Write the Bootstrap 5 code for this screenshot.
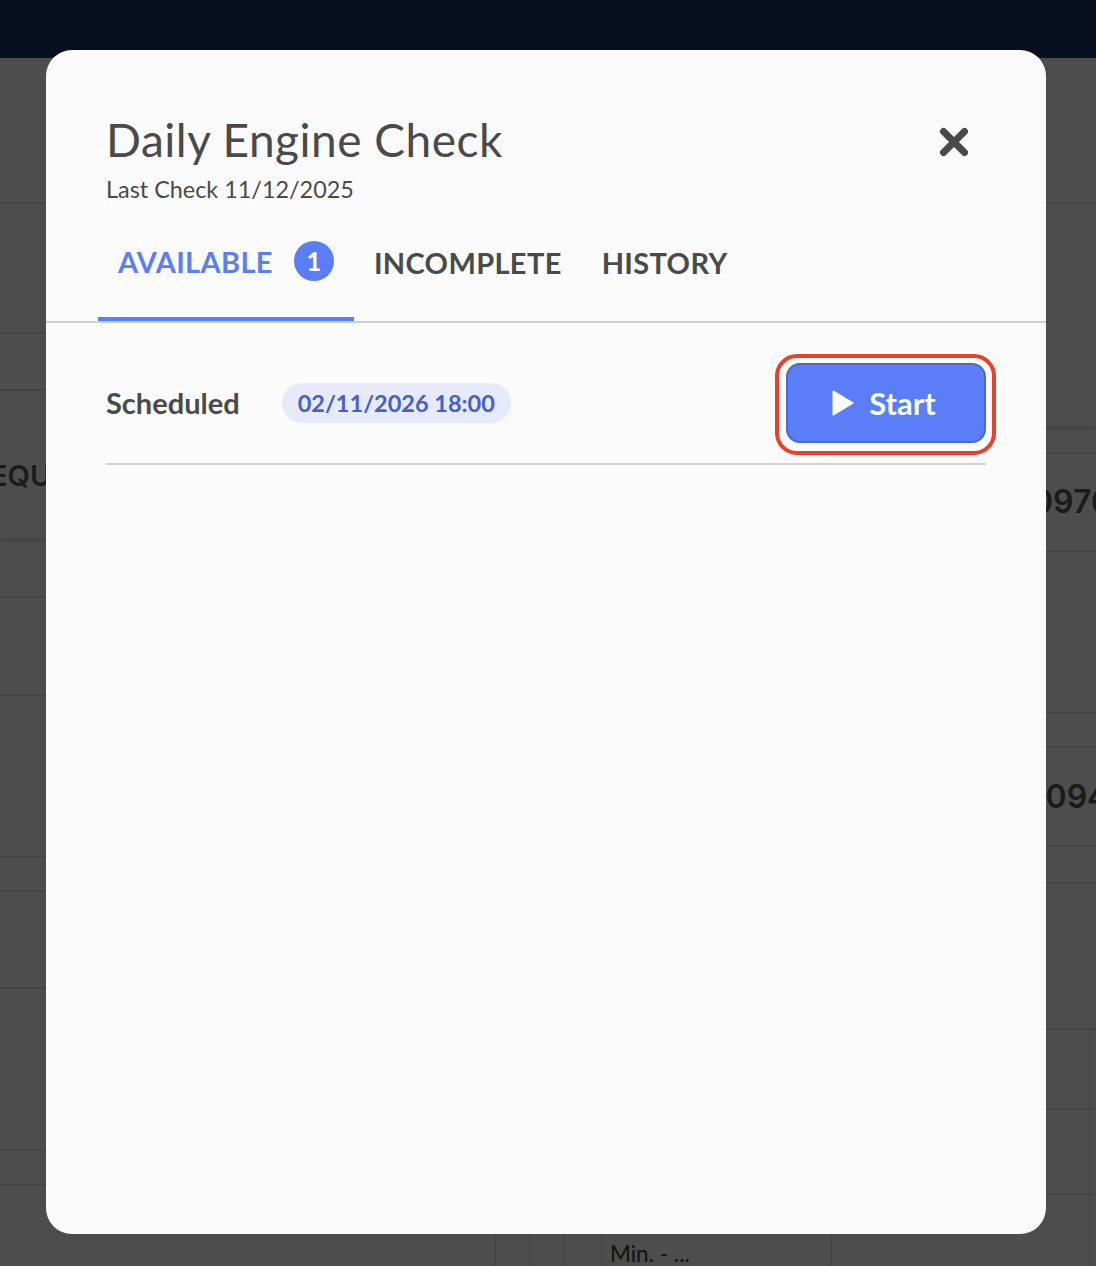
<!DOCTYPE html>
<html lang="en">
<head>
<meta charset="utf-8">
<title>Daily Engine Check</title>
<link href="https://cdn.jsdelivr.net/npm/bootstrap@5.3.0/dist/css/bootstrap.min.css" rel="stylesheet">
<style>
html, body { margin: 0; height: 1266px; overflow: hidden; background: #4d4d4d; font-family: "Lato", "Liberation Sans", sans-serif; }
.page-shell { height: 1266px; overflow: hidden; position: relative; }
.top-strip { height: 58px; background: #070f1e; }
.under-grid { height: 1208px; padding-top: 1px; }
.under-left { width: 496px; border-right: 2px solid #464646; }
.under-gap { width: 33px; }
.under-right { flex: 1; min-width: 0; border-left: 2px solid #464646; }
.ln { border-bottom: 2px solid #444; overflow: hidden; white-space: nowrap; color: #1b1b1b; font-weight: 700; }
.ln-soft { box-shadow: 0 2px 2px #464646; }
.lh26 { height: 26px; } .lh34 { height: 34px; } .lh35 { height: 35px; } .lh37 { height: 37px; }
.lh57 { height: 57px; } .lh58 { height: 58px; } .lh80 { height: 80px; } .lh85 { height: 85px; }
.lh97 { height: 97px; } .lh98 { height: 98px; } .lh99 { height: 99px; } .lh130 { height: 130px; }
.lh145 { height: 145px; } .lh146 { height: 146px; } .lh149 { height: 149px; } .lh162 { height: 162px; } .lh224 { height: 224px; }
.txt-equ { font-family: "Inter", sans-serif; font-size: 29px; font-weight: 600; margin-left: -10px; padding-top: 63px; }
.txt-num { font-family: "Inter", sans-serif; font-size: 32px; font-weight: 600; padding-left: 501px; }
.cell { border-right: 2px solid #464646; flex: none; }
.cw34 { width: 34px; } .cw38 { width: 38px; } .cw229 { width: 229px; } .cw259 { width: 259px; }
.txt-min { font-weight: 400; font-size: 22.5px; color: #111; padding: 42px 0 0 7px; }
.dialog-box { position: absolute; left: 46px; top: 50px; width: 1000px; height: 1184px; background: #fbfbfb; border: 0; border-radius: 26px; color: #4a4a4a; }
.dialog-head { padding: 62px 77px 0 60px; }
.dialog-title { font-size: 46px; font-weight: 400; line-height: 56px; margin: 0; color: #4a4a4a; letter-spacing: .5px; }
.dialog-sub { font-size: 23.4px; line-height: 28px; margin-top: 7px; }
.close-x { background: none; border: 0; padding: 0; width: 30px; height: 30px; margin-top: 15px; line-height: 0; }
.tab-strip { border-bottom: 2px solid #cfcfcf; padding-left: 52px; margin-top: 16px; height: 104px; }
.tab-item { font-size: 29px; font-weight: 700; color: #4a4a4a; padding: 0 20px 10px; height: 102px; letter-spacing: .35px; border-bottom: 4px solid transparent; }
.tab-item:hover { color: #4a4a4a; }
.tab-item.active { color: #597ef7; border-bottom-color: #597ef7; padding-bottom: 12px; }
.tab-count { background: #597ef7; width: 40px; height: 40px; font-size: 26px; padding: 0; margin: -2px 0 0 21px; line-height: 40px; color: #fff; font-weight: 700; }
.sched-row { margin: 0 60px; height: 142px; border-bottom: 2px solid #d2d2d2; padding: 40px 0 20px; }
.sched-label { font-size: 29px; font-weight: 700; }
.sched-date { background: #e6eafc; color: #4560c8; font-size: 23.5px; font-weight: 700; padding: 0 16px; height: 40px; line-height: 40px; margin-left: 42px; }
.start-btn { width: 200px; height: 80px; background: #597ef7; border: 2px solid #4a68cf; border-radius: 14px; color: #fff; font-size: 31px; font-weight: 700; gap: 15px; padding: 0 4px 0 0; }
.start-btn:hover { background: #597ef7; color: #fff; border-color: #4a68cf; }
.start-btn::after { content: ""; position: absolute; inset: -11px -12px -14px -13px; border: 4px solid #e8412a; border-radius: 22px; pointer-events: none; }
</style>
</head>
<body>
<div class="page-shell">
  <div class="top-strip"></div>
  <div class="under-grid d-flex">
    <div class="under-left">
      <div class="ln lh145"></div>
      <div class="ln lh130"></div>
      <div class="ln lh57"></div>
      <div class="ln ln-soft lh149"><div class="txt-equ">EQU</div></div>
      <div class="ln lh58"></div>
      <div class="ln lh98"></div>
      <div class="ln lh162"></div>
      <div class="ln lh34"></div>
      <div class="ln lh97"></div>
      <div class="ln lh162"></div>
      <div class="ln lh35"></div>
    </div>
    <div class="under-gap"></div>
    <div class="under-right">
      <div class="ln lh145"></div>
      <div class="ln ln-soft lh224"></div>
      <div class="ln lh26"></div>
      <div class="ln lh98 d-flex align-items-center"><div class="txt-num">0976</div></div>
      <div class="ln lh162"></div>
      <div class="ln lh34"></div>
      <div class="ln lh99 d-flex align-items-center"><div class="txt-num">1094</div></div>
      <div class="ln lh37"></div>
      <div class="ln lh146"></div>
      <div class="ln d-flex lh80">
        <div class="cell cw34"></div><div class="cell cw38"></div><div class="cell cw229"></div><div class="cell cw259"></div>
      </div>
      <div class="ln d-flex lh85">
        <div class="cell cw34"></div><div class="cell cw38"></div><div class="cell cw229"></div><div class="cell cw259"></div>
      </div>
      <div class="d-flex">
        <div class="cell cw34 lh80"></div><div class="cell cw38 lh80"></div><div class="cell cw229 lh80 ln border-bottom-0"><div class="txt-min">Min. - ...</div></div><div class="cell cw259 lh80"></div>
      </div>
    </div>
  </div>

  <div class="modal-content dialog-box">
    <div class="dialog-head d-flex justify-content-between align-items-start">
      <div>
        <h1 class="dialog-title">Daily Engine Check</h1>
        <div class="dialog-sub">Last Check 11/12/2025</div>
      </div>
      <button type="button" class="close-x" aria-label="Close">
        <svg width="30" height="30" viewBox="0 0 30 30"><path d="M4.5 4.5 25.5 25.5M25.5 4.5 4.5 25.5" stroke="#4a4a4a" stroke-width="7" stroke-linecap="round"/></svg>
      </button>
    </div>
    <nav class="nav tab-strip">
      <a class="nav-link tab-item active d-flex align-items-center" href="#">AVAILABLE<span class="badge rounded-pill tab-count">1</span></a>
      <a class="nav-link tab-item d-flex align-items-center" href="#">INCOMPLETE</a>
      <a class="nav-link tab-item d-flex align-items-center" href="#">HISTORY</a>
    </nav>
    <div class="sched-row d-flex align-items-center">
      <span class="sched-label">Scheduled</span>
      <span class="badge rounded-pill sched-date">02/11/2026 18:00</span>
      <button type="button" class="btn start-btn position-relative ms-auto d-flex align-items-center justify-content-center">
        <svg width="22" height="26" viewBox="0 0 22 26"><path d="M1.5 1.5 20.5 13 1.5 24.5Z" fill="#fff" stroke="#fff" stroke-width="2" stroke-linejoin="round"/></svg>
        Start
      </button>
    </div>
  </div>
</div>
<script src="https://cdn.jsdelivr.net/npm/bootstrap@5.3.0/dist/js/bootstrap.bundle.min.js"></script>
</body>
</html>
